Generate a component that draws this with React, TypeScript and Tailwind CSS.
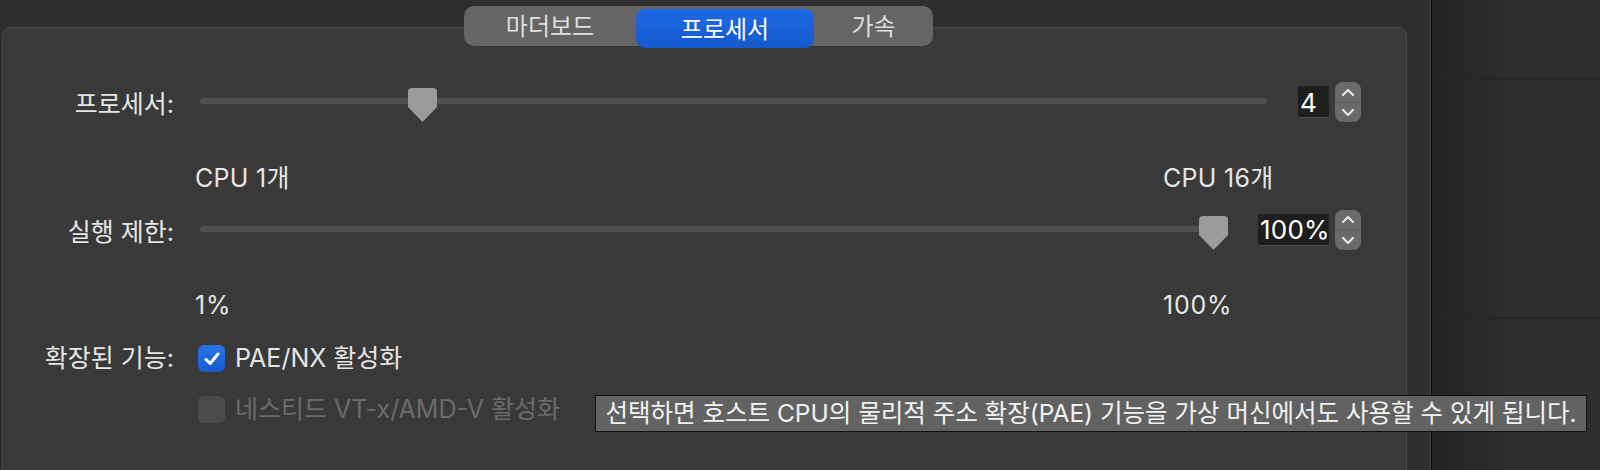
import { useState } from 'react'

const FONT = "font-['Inter','Noto_Sans_CJK_KR',sans-serif]"

function Thumb() {
  return (
    <svg width="29" height="34" viewBox="0 0 29 34" className="block">
      <path d="M4 0 H25 Q29 0 29 4 V19 L14.5 34 L0 19 V4 Q0 0 4 0 Z" fill="#9b9b9b" />
    </svg>
  )
}

function Slider({ width, value, min, max }: { width: number; value: number; min: number; max: number }) {
  const frac = (value - min) / (max - min)
  const left = frac * (width - 29)
  return (
    <div className="relative h-[40px] shrink-0" style={{ width }}>
      <div className="absolute left-0 right-0 top-[16px] h-[6px] rounded-full bg-[#505050]" />
      <div className="absolute top-[6px]" style={{ left }}>
        <Thumb />
      </div>
    </div>
  )
}

function Stepper() {
  return (
    <div className="flex h-[40px] w-[26px] shrink-0 flex-col overflow-hidden rounded-[8px] bg-[#6a6a6a]">
      <div className="flex flex-1 items-center justify-center border-b border-[#5a5a5a]">
        <svg width="14" height="9" viewBox="0 0 14 9">
          <path d="M2 7 L7 2 L12 7" stroke="#e8e8e8" strokeWidth="2.2" fill="none" strokeLinecap="round" strokeLinejoin="round" />
        </svg>
      </div>
      <div className="flex flex-1 items-center justify-center">
        <svg width="14" height="9" viewBox="0 0 14 9">
          <path d="M2 2 L7 7 L12 2" stroke="#e8e8e8" strokeWidth="2.2" fill="none" strokeLinecap="round" strokeLinejoin="round" />
        </svg>
      </div>
    </div>
  )
}

function Field({ value, width }: { value: string; width: number }) {
  return (
    <div
      className="flex h-[32px] shrink-0 items-center overflow-hidden border-b border-[#4a4a4a] bg-[#1e1e1e] pl-[2px] pt-[2px] text-[26px] leading-none tracking-[0.2px] text-white"
      style={{ width }}
    >
      {value}
    </div>
  )
}

function Checkbox({ checked, disabled, label }: { checked: boolean; disabled?: boolean; label: string }) {
  return (
    <div className="flex h-[28px] items-center">
      {checked ? (
        <div className="flex h-[27px] w-[27px] items-center justify-center rounded-[6px] bg-gradient-to-b from-[#2a74ea] to-[#1659d2]">
          <svg width="18" height="16" viewBox="0 0 18 16">
            <path d="M3 8.5 L7.2 12.5 L15 3" stroke="white" strokeWidth="3" fill="none" strokeLinecap="round" strokeLinejoin="round" />
          </svg>
        </div>
      ) : (
        <div className="h-[27px] w-[27px] rounded-[6px] bg-[#4b4b4b]" />
      )}
      <span
        className={`ml-[10px] whitespace-nowrap text-[25px] ${disabled ? 'text-[#6b6b6b]' : 'text-[#e4e4e4]'}`}
      >
        {label}
      </span>
    </div>
  )
}

export default function App() {
  const [tab, setTab] = useState(1)
  const tabs = ['마더보드', '프로세서', '가속']
  const tabWidths = ['w-[172px]', 'w-[178px]', 'w-[119px]']

  return (
    <div className={`relative flex h-[470px] w-[1600px] overflow-hidden bg-[#2e2e2e] ${FONT}`}>
      {/* left pane */}
      <div className="w-[1430px] shrink-0 pt-[6px] pl-[2px]">
        {/* segmented control */}
        <div className="relative z-10 ml-[462px] flex h-[40px] w-[469px] rounded-[10px] bg-[#656565]">
          {tabs.map((t, i) => (
            <button
              key={t}
              onClick={() => setTab(i)}
              className={`${tabWidths[i]} flex items-center justify-center pt-[2px] text-[24px] ${
                tab === i
                  ? 'mt-[3px] h-[39px] rounded-[9px] bg-gradient-to-b from-[#1d6ae6] to-[#1559cc] text-white'
                  : 'h-[40px] text-[#dedede]'
              }`}
            >
              {t}
            </button>
          ))}
        </div>

        {/* group box */}
        <div className="-mt-[19px] h-[480px] w-[1405px] rounded-t-[9px] border border-[#4a4a4a] bg-[#393939] pt-[53px]">
          <div className="flex items-center">
            <div className="w-[171px] whitespace-nowrap pt-[5px] text-right text-[25px] text-[#e6e6e6]">프로세서:</div>
            <div className="w-[26px]" />
            <Slider width={1067} value={4} min={1} max={16} />
            <div className="w-[31px]" />
            <Field value="4" width={31} />
            <div className="w-[6px]" />
            <Stepper />
          </div>

          <div className="mt-[41px] flex h-[28px] items-center text-[25px] tracking-[0.3px] text-[#e6e6e6]">
            <div className="w-[192px]" />
            <div className="w-[968px]">CPU 1개</div>
            <div>CPU 16개</div>
          </div>

          <div className="mt-[16px] flex items-center">
            <div className="w-[171px] whitespace-nowrap pt-[5px] text-right text-[25px] text-[#e6e6e6]">실행 제한:</div>
            <div className="w-[26px]" />
            <Slider width={1028} value={100} min={1} max={100} />
            <div className="w-[30px]" />
            <Field value="100%" width={71} />
            <div className="w-[6px]" />
            <Stepper />
          </div>

          <div className="mt-[41px] flex h-[28px] items-center text-[25px] tracking-[0.8px] text-[#e6e6e6]">
            <div className="w-[192px]" />
            <div className="w-[968px]">1%</div>
            <div>100%</div>
          </div>

          <div className="mt-[20px] flex items-center">
            <div className="w-[171px] whitespace-nowrap text-right text-[25px] text-[#e6e6e6]">확장된 기능:</div>
            <div className="w-[24px]" />
            <Checkbox checked label="PAE/NX 활성화" />
          </div>
          <div className="mt-[18px] flex items-center">
            <div className="w-[195px]" />
            <Checkbox checked={false} disabled label="네스티드 VT-x/AMD-V 활성화" />
          </div>
        </div>
      </div>

      {/* divider */}
      <div className="w-px shrink-0 bg-[#4c4c4c]" />
      <div className="w-px shrink-0 bg-[#050505]" />

      {/* right pane */}
      <div className="flex flex-1 flex-col bg-gradient-to-r from-[#232323] via-[#2e2e2e] to-[#2e2e2e]">
        <div className="h-[78px]" />
        <div className="h-[2px] bg-[#262626]" />
        <div className="h-[237px]" />
        <div className="h-[2px] bg-[#262626]" />
      </div>

      {/* tooltip */}
      <div className="absolute left-[595px] top-[395px] flex h-[37px] w-[992px] items-center justify-center whitespace-nowrap border border-[#111] bg-[#626262] text-[24.5px] text-[#f2f2f2]">
        선택하면 호스트 CPU의 물리적 주소 확장(PAE) 기능을 가상 머신에서도 사용할 수 있게 됩니다.
      </div>
    </div>
  )
}
